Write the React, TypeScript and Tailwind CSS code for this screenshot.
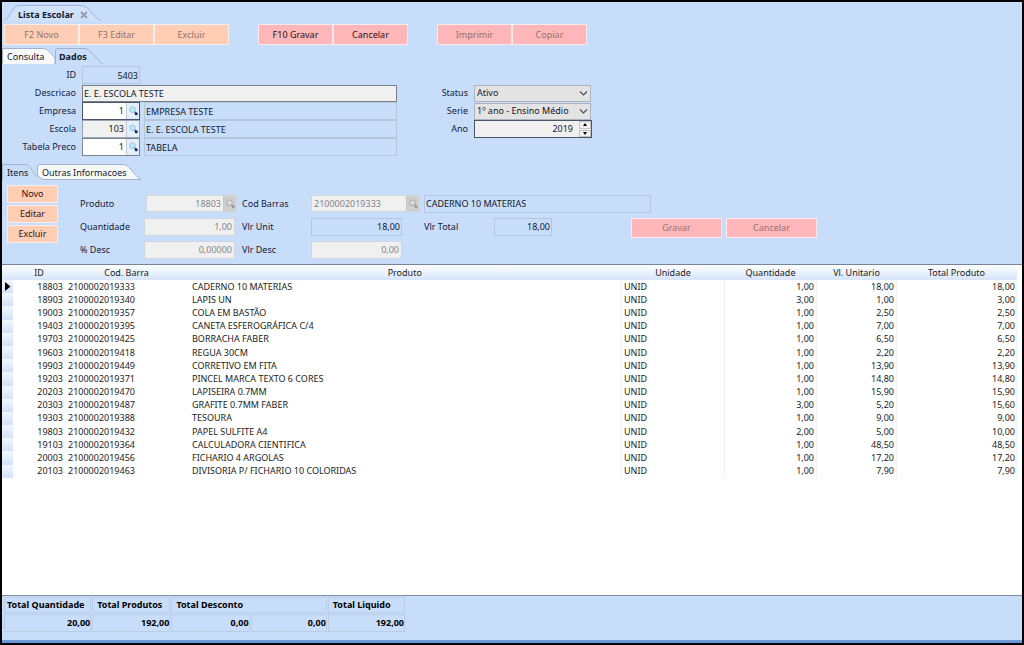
import { useState } from 'react'
import type { ReactNode } from 'react'
import clsx from 'clsx'

interface Item {
  id: string
  barcode: string
  product: string
  qty: string
  price: string
  total: string
}

const items: Item[] = [
  { id: '18803', barcode: '2100002019333', product: 'CADERNO 10 MATERIAS', qty: '1,00', price: '18,00', total: '18,00' },
  { id: '18903', barcode: '2100002019340', product: 'LAPIS UN', qty: '3,00', price: '1,00', total: '3,00' },
  { id: '19003', barcode: '2100002019357', product: 'COLA EM BASTÃO', qty: '1,00', price: '2,50', total: '2,50' },
  { id: '19403', barcode: '2100002019395', product: 'CANETA ESFEROGRÁFICA C/4', qty: '1,00', price: '7,00', total: '7,00' },
  { id: '19703', barcode: '2100002019425', product: 'BORRACHA FABER', qty: '1,00', price: '6,50', total: '6,50' },
  { id: '19603', barcode: '2100002019418', product: 'REGUA 30CM', qty: '1,00', price: '2,20', total: '2,20' },
  { id: '19903', barcode: '2100002019449', product: 'CORRETIVO EM FITA', qty: '1,00', price: '13,90', total: '13,90' },
  { id: '19203', barcode: '2100002019371', product: 'PINCEL MARCA TEXTO 6 CORES', qty: '1,00', price: '14,80', total: '14,80' },
  { id: '20203', barcode: '2100002019470', product: 'LAPISEIRA 0.7MM', qty: '1,00', price: '15,90', total: '15,90' },
  { id: '20303', barcode: '2100002019487', product: 'GRAFITE 0.7MM FABER', qty: '3,00', price: '5,20', total: '15,60' },
  { id: '19303', barcode: '2100002019388', product: 'TESOURA', qty: '1,00', price: '9,00', total: '9,00' },
  { id: '19803', barcode: '2100002019432', product: 'PAPEL SULFITE A4', qty: '2,00', price: '5,00', total: '10,00' },
  { id: '19103', barcode: '2100002019364', product: 'CALCULADORA CIENTIFICA', qty: '1,00', price: '48,50', total: '48,50' },
  { id: '20003', barcode: '2100002019456', product: 'FICHARIO 4 ARGOLAS', qty: '1,00', price: '17,20', total: '17,20' },
  { id: '20103', barcode: '2100002019463', product: 'DIVISORIA P/ FICHARIO 10 COLORIDAS', qty: '1,00', price: '7,90', total: '7,90' },
]

const readOnlyBox = 'h-[18px] border border-[#b4c6dc] bg-transparent px-px text-[#10182c] outline-none'
const disabledBox = 'h-[18px] border border-[#d0d6de] bg-[#f0f0f0] px-0.5 text-[#85858a] outline-none'

interface ActionButtonProps {
  children: ReactNode
  tone: 'peach' | 'pink'
  disabled?: boolean
  className?: string
}

function ActionButton({ children, tone, disabled, className }: ActionButtonProps) {
  return (
    <button
      type="button"
      disabled={disabled}
      className={clsx(
        'flex items-center justify-center border',
        tone === 'peach' ? 'border-[#fbeee8] bg-[#ffceb4]' : 'border-[#fbe9ee] bg-[#ffb6b8]',
        disabled ? 'text-[#98716a]' : 'text-[#2a1414]',
        className
      )}
    >
      {children}
    </button>
  )
}

interface TabProps {
  children: ReactNode
  fill: string
  className?: string
  path: string
  viewBox: string
}

function Tab({ children, fill, className, path, viewBox }: TabProps) {
  return (
    <button type="button" role="tab" className={clsx('relative flex items-center pt-[2px] text-left', className)}>
      <svg className="absolute inset-0 h-full w-full" viewBox={viewBox} preserveAspectRatio="none" aria-hidden="true">
        <path d={path} fill={fill} stroke="#9fb2ce" strokeWidth="1" />
      </svg>
      <span className="relative flex items-center whitespace-nowrap">{children}</span>
    </button>
  )
}

function SearchButton({ label, disabled }: { label: string; disabled?: boolean }) {
  return (
    <button
      type="button"
      aria-label={label}
      disabled={disabled}
      className={clsx(
        'flex h-full w-[13px] shrink-0 items-center justify-center border-l',
        disabled ? 'border-[#c6c6c6] bg-[#cfcfcf]' : 'border-[#c3cad4] bg-[#e6eefa]'
      )}
    >
      <svg width="11" height="12" viewBox="0 0 11 12" aria-hidden="true">
        <circle cx="4.5" cy="4.7" r="2.8" fill={disabled ? '#dedede' : '#b9ecfb'} stroke={disabled ? '#a5a5a5' : '#9cc4e4'} />
        <path d="M6.6 6.8L7.6 8" stroke={disabled ? '#9b9b9b' : '#4d78b4'} strokeWidth="1.5" />
        <circle cx="8.2" cy="8.8" r="1.5" fill={disabled ? '#9b9b9b' : '#0c2350'} />
      </svg>
    </button>
  )
}

interface LookupRowProps {
  id: string
  label: string
  code: string
  description: string
  boxClass: string
}

function LookupRow({ id, label, code, description, boxClass }: LookupRowProps) {
  return (
    <div className="flex h-[18px] items-center">
      <label htmlFor={id} className="w-[74px] shrink-0 text-right">
        {label}
      </label>
      <div className={clsx('ml-[6px] flex h-[18px] w-[58px] shrink-0 border', boxClass)}>
        <input id={id} defaultValue={code} className="w-0 flex-1 bg-transparent pr-0.5 text-right text-[#10182c] outline-none" />
        <SearchButton label={`Pesquisar ${label}`} />
      </div>
      <input
        aria-label={`Nome ${label}`}
        readOnly
        value={description}
        className={clsx(readOnlyBox, 'ml-[4px] w-[253px]')}
      />
    </div>
  )
}

function SelectRow({ id, label, value }: { id: string; label: string; value: string }) {
  return (
    <div className="flex h-[18px] items-center">
      <label htmlFor={id} className="w-[29px] text-right">
        {label}
      </label>
      <div className="relative ml-[6px]">
        <select
          id={id}
          className="block h-[17px] w-[117px] appearance-none border border-[#adb4be] bg-[#e3e3e3] px-0.5 text-[#10182c] outline-none"
        >
          <option>{value}</option>
        </select>
        <svg
          className="pointer-events-none absolute top-[5px] right-[3px]"
          width="9"
          height="7"
          viewBox="0 0 9 7"
          fill="none"
          aria-hidden="true"
        >
          <path d="M1 1.5l3.5 3.5L8 1.5" stroke="#4c4c4c" strokeWidth="1.1" />
        </svg>
      </div>
    </div>
  )
}

function ItemForm() {
  return (
    <div className="flex flex-col">
      <div className="flex h-[23px] items-center">
        <label htmlFor="produto" className="w-[66px]">Produto</label>
        <div className="w-[96px]">
          <div className="flex h-[17px] w-[91px] border border-[#d0d6de] bg-[#f0f0f0]">
            <input id="produto" disabled value="18803" className="w-0 flex-1 pr-0.5 text-right text-[#85858a]" />
            <SearchButton label="Pesquisar produto" disabled />
          </div>
        </div>
        <label htmlFor="codBarras" className="w-[69px]">Cod Barras</label>
        <div className="flex h-[17px] w-[109px] border border-[#d0d6de] bg-[#f0f0f0]">
          <input id="codBarras" disabled value="2100002019333" className="w-0 flex-1 pl-0.5 text-[#85858a]" />
          <SearchButton label="Pesquisar codigo" disabled />
        </div>
        <input aria-label="Nome do produto" readOnly value="CADERNO 10 MATERIAS" className={clsx(readOnlyBox, 'ml-1 w-[227px]')} />
      </div>
      <div className="flex h-[23px] items-center">
        <label htmlFor="quantidade" className="w-[64px]">Quantidade</label>
        <div className="w-[98px]">
          <input id="quantidade" disabled value="1,00" className={clsx(disabledBox, 'block w-[91px] text-right')} />
        </div>
        <label htmlFor="vlrUnit" className="w-[69px]">Vlr Unit</label>
        <input id="vlrUnit" readOnly value="18,00" className={clsx(readOnlyBox, 'w-[91px] text-right')} />
        <label htmlFor="vlrTotal" className="ml-[22px] w-[70px]">Vlr Total</label>
        <input id="vlrTotal" readOnly value="18,00" className={clsx(readOnlyBox, 'w-[58px] text-right')} />
        <div className="ml-[79px] flex gap-1 pt-[2px]">
          <ActionButton tone="pink" disabled className="h-5 w-[91px]">Gravar</ActionButton>
          <ActionButton tone="pink" disabled className="h-5 w-[91px]">Cancelar</ActionButton>
        </div>
      </div>
      <div className="flex h-[23px] items-center">
        <label htmlFor="percDesc" className="w-[64px]">% Desc</label>
        <div className="w-[98px]">
          <input id="percDesc" disabled value="0,00000" className={clsx(disabledBox, 'block w-[91px] text-right')} />
        </div>
        <label htmlFor="vlrDesc" className="w-[69px]">Vlr Desc</label>
        <input id="vlrDesc" disabled value="0,00" className={clsx(disabledBox, 'w-[91px] text-right')} />
      </div>
    </div>
  )
}

function ItemsTable() {
  const [current, setCurrent] = useState('18803')

  return (
    <table className="h-[213px] w-full table-fixed border-collapse text-[#1c1c24]">
      <colgroup>
        <col className="w-[11px]" />
        <col className="w-[52px]" />
        <col className="w-[123px]" />
        <col />
        <col className="w-[103px]" />
        <col className="w-[92px]" />
        <col className="w-[80px]" />
        <col className="w-[120px]" />
      </colgroup>
      <thead>
        <tr className="h-[15px] bg-linear-to-b from-white to-[#d6e5fa]">
          <th></th>
          <th className="font-normal">ID</th>
          <th className="font-normal">Cod. Barra</th>
          <th className="font-normal">Produto</th>
          <th className="font-normal">Unidade</th>
          <th className="font-normal">Quantidade</th>
          <th className="font-normal">Vl. Unitario</th>
          <th className="font-normal">Total Produto</th>
        </tr>
      </thead>
      <tbody>
        {items.map((item) => (
          <tr key={item.id} onClick={() => setCurrent(item.id)}>
            <td className="bg-linear-to-b from-[#f3f7fe] to-[#d3e1f8]">
              {current === item.id && (
                <svg className="ml-[3px] block" width="6" height="10" viewBox="0 0 6 10" aria-hidden="true">
                  <path d="M0 0l5.5 4.5L0 9z" fill="#000" />
                </svg>
              )}
            </td>
            <td className="pr-0.5 text-right">{item.id}</td>
            <td className="pl-[3px]">{item.barcode}</td>
            <td className="border-r border-[#edf4fa] pl-1">{item.product}</td>
            <td className="border-r border-[#edf4fa] pl-0.5">UNID</td>
            <td className="border-r border-[#edf4fa] pr-0.5 text-right">{item.qty}</td>
            <td className="border-r border-[#edf4fa] pr-0.5 text-right">{item.price}</td>
            <td className="border-r border-[#edf4fa] pr-px text-right">{item.total}</td>
          </tr>
        ))}
      </tbody>
    </table>
  )
}

function TotalsBar() {
  const cell = 'border border-[#bacde7] p-0'
  return (
    <footer className="border-t border-[#7d8ea3] bg-[#c8ddfa]">
      <table className="w-[404px] table-fixed border-separate border-spacing-px pl-px font-bold text-black">
        <colgroup>
          <col className="w-[87px]" />
          <col className="w-[78px]" />
          <col className="w-[78px]" />
          <col className="w-[76px]" />
          <col className="w-[77px]" />
        </colgroup>
        <thead>
          <tr className="h-[16px] text-left whitespace-nowrap">
            <th className={clsx(cell, 'pl-0.5')}>Total Quantidade</th>
            <th className={clsx(cell, 'pl-1')}>Total Produtos</th>
            <th colSpan={2} className={clsx(cell, 'pl-1')}>Total Desconto</th>
            <th className={clsx(cell, 'pl-1')}>Total Liquido</th>
          </tr>
        </thead>
        <tbody>
          <tr className="h-[18px] text-right">
            <td className={cell}>20,00</td>
            <td className={cell}>192,00</td>
            <td className={cell}>0,00</td>
            <td className={cell}>0,00</td>
            <td className={cell}>192,00</td>
          </tr>
        </tbody>
      </table>
      <div className="mt-[7px] h-[3px] bg-[#6a9bd8]" />
    </footer>
  )
}

export default function App() {
  const [year, setYear] = useState(2019)

  return (
    <div className="flex min-h-screen flex-col border-2 border-black bg-[#c8ddfa] font-['Noto_Sans',sans-serif] text-[9px] leading-[12px] text-[#14203a]">
      {/* Window tab */}
      <div className="flex pt-[3px] pl-[3px]" role="tablist">
        <Tab
          fill="#cfe1fb"
          className="h-[17px] w-[96px] pl-[13px] font-bold text-[#10182c]"
          viewBox="0 0 96 17"
          path="M-1 16C5 13 7 1 14 .5H76C84 .5 88 12 96 16"
        >
          Lista Escolar
          <svg className="ml-[6px]" width="8" height="8" viewBox="0 0 8 8" aria-hidden="true">
            <path d="M1 1l6 6M7 1L1 7" stroke="#939cab" strokeWidth="1.8" />
          </svg>
        </Tab>
      </div>

      {/* Toolbar */}
      <div className="mt-[2px] flex gap-[29px] pl-[2px]">
        <div className="flex">
          <ActionButton tone="peach" disabled className="h-[21px] w-[75px]">F2 Novo</ActionButton>
          <ActionButton tone="peach" disabled className="h-[21px] w-[75px]">F3 Editar</ActionButton>
          <ActionButton tone="peach" disabled className="h-[21px] w-[75px]">Excluir</ActionButton>
        </div>
        <div className="flex">
          <ActionButton tone="pink" className="h-[21px] w-[75px]">F10 Gravar</ActionButton>
          <ActionButton tone="pink" className="h-[21px] w-[75px]">Cancelar</ActionButton>
        </div>
        <div className="flex">
          <ActionButton tone="pink" disabled className="h-[21px] w-[75px]">Imprimir</ActionButton>
          <ActionButton tone="pink" disabled className="h-[21px] w-[75px]">Copiar</ActionButton>
        </div>
      </div>

      <div className="mt-[3px] flex" role="tablist">
        <Tab
          fill="#f8f9fb"
          className="h-[16px] w-[53px] pl-[5px] text-[#10182c]"
          viewBox="0 0 53 16"
          path="M.5 17V.5H41C46 .5 48 5 53 10V17"
        >
          Consulta
        </Tab>
        <Tab
          fill="#c8ddfa"
          className="h-[16px] w-[48px] pl-[4px] font-bold text-[#10182c]"
          viewBox="0 0 48 16"
          path="M.5 17V3Q.5 .5 3 .5H29C36 .5 40 11 48 16"
        >
          Dados
        </Tab>
      </div>

      {/* Header record */}
      <div className="flex pt-[2px]">
        <div className="flex flex-col">
          <div className="flex h-[18px] items-center">
            <label htmlFor="id" className="w-[74px] text-right">ID</label>
            <input id="id" readOnly value="5403" className={clsx(readOnlyBox, 'ml-[6px] w-[58px] text-right')} />
          </div>
          <div className="flex h-[18px] items-center">
            <label htmlFor="descricao" className="w-[74px] text-right">Descricao</label>
            <input
              id="descricao"
              defaultValue="E. E. ESCOLA TESTE"
              className="ml-[6px] h-[17px] w-[315px] border border-[#7a8089] bg-[#f0f0f0] px-px text-[#10182c] outline-none"
            />
          </div>
          <LookupRow id="empresa" label="Empresa" code="1" description="EMPRESA TESTE" boxClass="border-[#4a5468] bg-white" />
          <LookupRow id="escola" label="Escola" code="103" description="E. E. ESCOLA TESTE" boxClass="border-[#9aa4b2] bg-[#f0f0f0]" />
          <LookupRow id="tabela" label="Tabela Preco" code="1" description="TABELA" boxClass="border-[#7a8494] bg-white" />
        </div>
        <div className="ml-[42px] flex flex-col pt-[18px]">
          <SelectRow id="status" label="Status" value="Ativo" />
          <SelectRow id="serie" label="Serie" value="1º ano - Ensino Médio" />
          <div className="flex h-[18px] items-center">
            <label htmlFor="ano" className="w-[29px] text-right">Ano</label>
            <div className="ml-[6px] flex h-[18px] w-[118px] border border-[#4a5468] bg-[#f0f0f0]">
              <input
                id="ano"
                value={year}
                onChange={(e) => setYear(Number(e.target.value))}
                className="w-0 flex-1 pr-[6px] text-right text-[#10182c] outline-none"
              />
              <div className="flex w-[12px] flex-col gap-px">
                <button type="button" aria-label="Aumentar ano" onClick={() => setYear(year + 1)} className="flex flex-1 items-center justify-center border border-[#c4c4c4]">
                  <svg width="6" height="3" viewBox="0 0 6 3" aria-hidden="true"><path d="M1 3l2-3 2 3z" /></svg>
                </button>
                <button type="button" aria-label="Diminuir ano" onClick={() => setYear(year - 1)} className="flex flex-1 items-center justify-center border border-[#c4c4c4]">
                  <svg width="6" height="3" viewBox="0 0 6 3" aria-hidden="true"><path d="M1 0l2 3 2-3z" /></svg>
                </button>
              </div>
            </div>
          </div>
        </div>
      </div>

      <div className="mt-[8px] flex" role="tablist">
        <Tab
          fill="#c8ddfa"
          className="h-[16px] w-[35px] pl-[5px] text-[#10182c]"
          viewBox="0 0 35 16"
          path="M.5 17V.5H23C29 .5 30 8 35 13"
        >
          Itens
        </Tab>
        <Tab
          fill="#f8f9fb"
          className="h-[16px] w-[104px] pl-[5px] text-[#10182c]"
          viewBox="0 0 104 16"
          path="M.5 11V3Q.5 .5 3 .5H86C93 .5 96 11 104 15.5H6Q3 14 .5 11"
        >
          Outras Informacoes
        </Tab>
      </div>

      {/* Item editor */}
      <div className="flex h-[84px] gap-[22px] pl-[5px]">
        <div className="flex flex-col gap-[2px] pt-[5px]">
          <ActionButton tone="peach" className="h-[18px] w-[51px]">Novo</ActionButton>
          <ActionButton tone="peach" className="h-[18px] w-[51px]">Editar</ActionButton>
          <ActionButton tone="peach" className="h-[18px] w-[51px]">Excluir</ActionButton>
        </div>
        <div className="pt-[12px]">
          <ItemForm />
        </div>
      </div>

      <div className="flex-1 border-t border-[#75859c] bg-white pr-[5px]">
        <ItemsTable />
      </div>

      <TotalsBar />
    </div>
  )
}
